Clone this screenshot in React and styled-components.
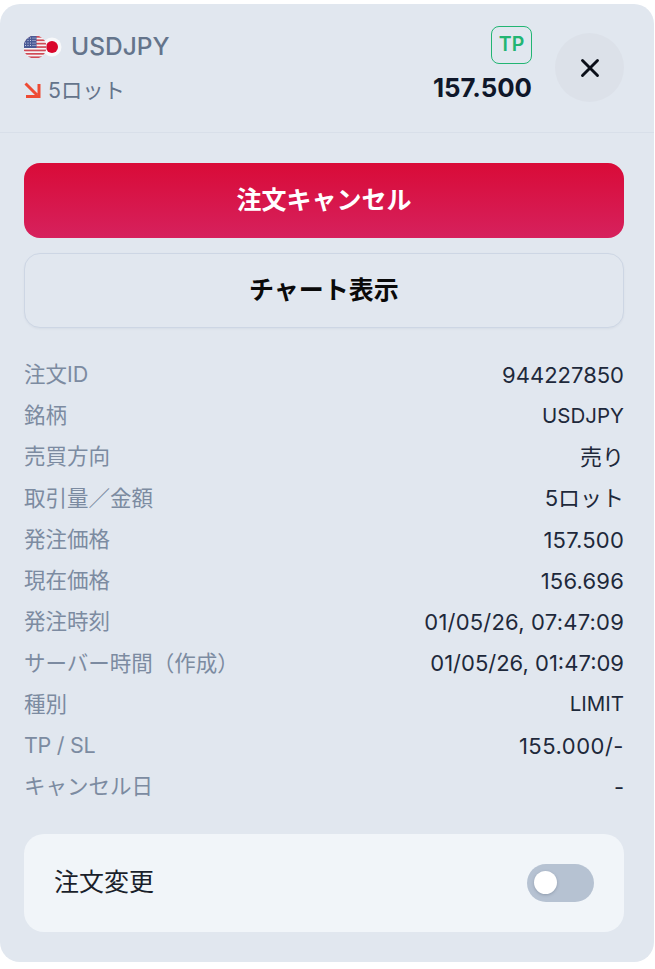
import React from "react";
import styled, { createGlobalStyle } from "styled-components";

const Global = createGlobalStyle`
  html, body { margin: 0; padding: 0; background: #fff; }
  body { font-family: Inter, "Noto Sans CJK JP", sans-serif; }
  * { box-sizing: border-box; }
`;
const FONT = `Inter, "Noto Sans CJK JP", sans-serif`;

const Panel = styled.div`
  width: 654px; height: 958px; margin-top: 4px; background: #e1e7ef; border-radius: 20px;
  display: flex; flex-direction: column; overflow: hidden;
`;
const Header = styled.header`
  height: 129px; padding: 22px 30px 0 24px; border-bottom: 1px solid #d8dfe9;
  display: flex; align-items: flex-start;
`;
const Instrument = styled.div`
  flex: 1; display: flex; flex-direction: column;
`;
const SymbolRow = styled.div`
  display: flex; align-items: center; gap: 7px; height: 40px;
`;
const FlagIcon = styled.svg`
  margin-top: 2px;
`;
const Symbol = styled.span`
  font: 500 24.5px/40px ${FONT}; color: #64748b;
`;
const LotRow = styled.div`
  display: flex; align-items: center; gap: 7px; height: 30px; margin-top: 9px;
`;
const Lots = styled.span`
  font: 400 21.3px/30px ${FONT}; color: #64748b;
`;
const Quote = styled.div`
  display: flex; flex-direction: column; align-items: flex-end; margin-right: 23px;
`;
const Badge = styled.span`
  width: 41px; height: 38px; border: 1px solid #22b573; border-radius: 8px;
  display: flex; align-items: center; justify-content: center;
  font: 600 19.5px/1 ${FONT}; color: #22b573;
`;
const Price = styled.span`
  font: 700 25.8px/36px ${FONT}; color: #0f172a; margin-top: 6px;
`;
const Close = styled.button`
  width: 69px; height: 69px; margin-top: 7px; padding: 0; border: 0; border-radius: 50%;
  background: #dce1e9; color: #0b0f19; display: flex; align-items: center; justify-content: center;
`;
const Body = styled.div`
  padding: 30px 30px 0 24px; display: flex; flex-direction: column;
`;
const ActionButton = styled.button`
  width: 600px; height: 75px; padding: 0; border-radius: 16px;
  display: flex; align-items: center; justify-content: center;
  font: 700 25px/1 ${FONT};
  color: ${(p) => (p.$danger ? "#fff" : "#0a0a0a")};
  background: ${(p) => (p.$danger ? "linear-gradient(180deg, #d90b38, #d6215d)" : "#e1e7ef")};
  border: ${(p) => (p.$danger ? "0" : "1px solid #cdd6e4")};
  margin-bottom: 15px;
  box-shadow: ${(p) => (p.$danger ? "none" : "0 1px 2px rgba(100,116,139,.08)")};
`;
const List = styled.dl`
  margin: 11px 0 0; display: flex; flex-direction: column;
`;
const Row = styled.div`
  height: 41.25px; display: flex; align-items: center; justify-content: space-between;
`;
const Label = styled.dt`
  font: 400 21.5px/1 ${FONT}; color: #7c8ba1;
  letter-spacing: ${(p) => (p.$latin ? "-0.3px" : "0")};
`;
const spacing = { figure: "0.2px", wide: "0.5px" };
const Value = styled.dd`
  margin: 0; color: #1e293b;
  font: 400 ${(p) => (p.$kind === "word" ? "20.5px" : "22px")}/1 ${FONT};
  letter-spacing: ${(p) => spacing[p.$kind] || "0"};
`;
const ToggleCard = styled.div`
  width: 600px; height: 98px; margin-top: 26px; padding: 0 30px; background: #f1f5f9; border-radius: 20px;
  display: flex; align-items: center; justify-content: space-between;
`;
const ToggleLabel = styled.span`
  font: 400 25px/1 ${FONT}; color: #1a1f2b;
`;
const Track = styled.div`
  width: 67px; height: 38px; padding-left: 7px; border-radius: 19px; background: #b6c2d2;
  display: flex; align-items: center;
`;
const Knob = styled.div`
  width: 23px; height: 23px; border-radius: 50%; background: #fff;
  box-shadow: 0 1px 3px rgba(71,85,105,.35);
`;

const Flags = () => (
  <FlagIcon width="40" height="24" viewBox="0 0 40 24" aria-hidden="true">
    <defs>
      <clipPath id="us"><circle cx="11" cy="12" r="11.5" /></clipPath>
    </defs>
    <circle cx="28" cy="12" r="9.5" fill="#f7f8fa" />
    <circle cx="28" cy="12" r="6" fill="#d9062b" />
    <g clipPath="url(#us)">
      <rect x="-1" width="24" height="24" fill="#f4f4f6" />
      {[1, 4.4, 7.8, 11.2, 14.6, 18, 21.4].map((y) => (
        <rect key={y} x="-1" y={y} width="24" height="1.7" fill="#d04a56" />
      ))}
      <rect x="-1" width="13.5" height="12" y="1" fill="#4a5a96" />
      {[3, 5.5, 8, 10.5].flatMap((y) =>
        [1.5, 4, 6.5, 9, 11].map((x) => (
          <circle key={`${x}-${y}`} cx={x} cy={y} r=".55" fill="#dfe4f2" />
        ))
      )}
    </g>
  </FlagIcon>
);

const DownArrow = () => (
  <svg width="17" height="16" viewBox="0 0 17 16" aria-hidden="true">
    <path d="M1.5 1.5 L13 13 M15 2 V14.5 H2" fill="none" stroke="#ee4b34" strokeWidth="3" />
  </svg>
);

const CloseIcon = () => (
  <svg width="20" height="20" viewBox="0 0 20 20" aria-hidden="true">
    <path d="M2.5 2.5 L17.5 17.5 M17.5 2.5 L2.5 17.5" fill="none" stroke="currentColor" strokeWidth="2.9" strokeLinecap="round" />
  </svg>
);

const rows = [
  ["注文ID", "944227850"],
  ["銘柄", "USDJPY", "word"],
  ["売買方向", "売り"],
  ["取引量／金額", "5ロット"],
  ["発注価格", "157.500", "figure"],
  ["現在価格", "156.696", "figure"],
  ["発注時刻", "01/05/26, 07:47:09", "figure"],
  ["サーバー時間（作成）", "01/05/26, 01:47:09"],
  ["種別", "LIMIT", "word"],
  ["TP / SL", "155.000/-", "wide", true],
  ["キャンセル日", "-"],
];

export default function App() {
  return (
    <>
      <Global />
      <Panel>
        <Header>
          <Instrument>
            <SymbolRow>
              <Flags />
              <Symbol>USDJPY</Symbol>
            </SymbolRow>
            <LotRow>
              <DownArrow />
              <Lots>5ロット</Lots>
            </LotRow>
          </Instrument>
          <Quote>
            <Badge>TP</Badge>
            <Price>157.500</Price>
          </Quote>
          <Close aria-label="close"><CloseIcon /></Close>
        </Header>
        <Body>
          <ActionButton $danger>注文キャンセル</ActionButton>
          <ActionButton>チャート表示</ActionButton>
          <List>
            {rows.map(([k, v, kind, latin]) => (
              <Row key={k}>
                <Label $latin={latin}>{k}</Label>
                <Value $kind={kind}>{v}</Value>
              </Row>
            ))}
          </List>
          <ToggleCard>
            <ToggleLabel>注文変更</ToggleLabel>
            <Track><Knob /></Track>
          </ToggleCard>
        </Body>
      </Panel>
    </>
  );
}
